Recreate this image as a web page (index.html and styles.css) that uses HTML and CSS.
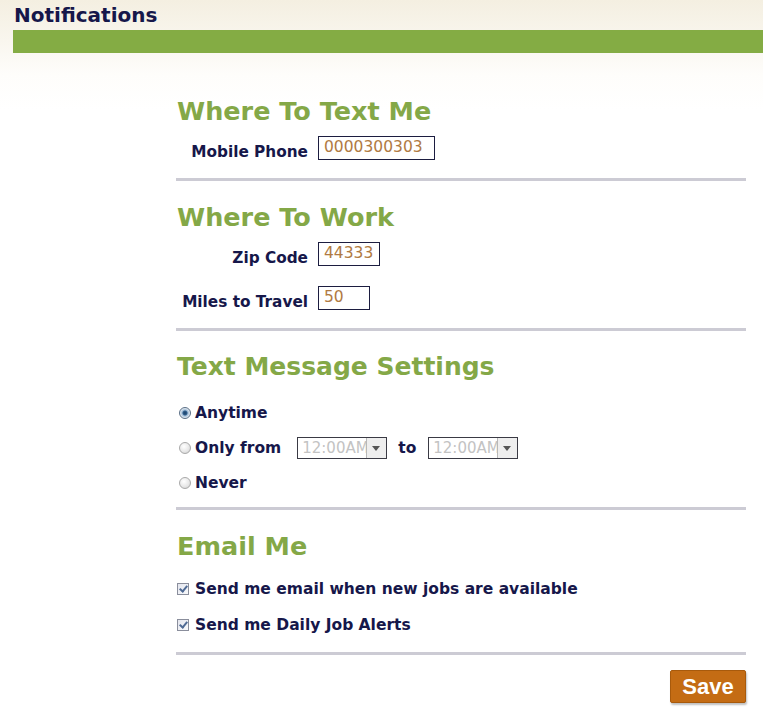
FILE: index.html
```html
<!DOCTYPE html>
<html>
<head>
<meta charset="utf-8">
<title>Notifications</title>
<link rel="stylesheet" href="styles.css">
</head>
<body>
<header class="page-header">
  <h1 class="page-title">Notifications</h1>
  <div class="title-bar"></div>
</header>
<main class="content">
  <section class="section">
    <h2 class="section-title">Where To Text Me</h2>
    <div class="field-row">
      <label class="field-label">Mobile Phone</label>
      <span class="text-input w-phone">0000300303</span>
    </div>
  </section>
  <hr class="divider">
  <section class="section">
    <h2 class="section-title t-work">Where To Work</h2>
    <div class="field-row">
      <label class="field-label">Zip Code</label>
      <span class="text-input w-zip">44333</span>
    </div>
    <div class="field-row row-gap">
      <label class="field-label">Miles to Travel</label>
      <span class="text-input w-miles">50</span>
    </div>
  </section>
  <hr class="divider">
  <section class="section">
    <h2 class="section-title t-settings">Text Message Settings</h2>
    <div class="option-row first">
      <span class="radio checked"></span><span class="option-text">Anytime</span>
    </div>
    <div class="option-row">
      <span class="radio"></span><span class="option-text">Only from</span>
      <span class="select"><span class="select-value">12:00AM</span><span class="select-arrow"></span></span>
      <span class="to-text">to</span>
      <span class="select"><span class="select-value">12:00AM</span><span class="select-arrow"></span></span>
    </div>
    <div class="option-row">
      <span class="radio"></span><span class="option-text">Never</span>
    </div>
  </section>
  <hr class="divider d-three">
  <section class="section">
    <h2 class="section-title t-email">Email Me</h2>
    <div class="check-row first">
      <span class="checkbox"></span><span class="option-text">Send me email when new jobs are available</span>
    </div>
    <div class="check-row">
      <span class="checkbox"></span><span class="option-text">Send me Daily Job Alerts</span>
    </div>
  </section>
  <hr class="divider d-four">
  <div class="actions">
    <button class="save-btn">Save</button>
  </div>
</main>
</body>
</html>
```

FILE: styles.css
```css
html, body {
  margin: 0;
  padding: 0;
}
body {
  width: 763px;
  height: 722px;
  overflow: hidden;
  font-family: "DejaVu Sans", Verdana, sans-serif;
  color: #16174a;
  background: linear-gradient(to bottom, #f4efe1 0px, #f9f6ee 40px, #fefdfb 75px, #ffffff 110px);
}
.page-header {
  padding-top: 3px;
}
.page-title {
  margin: 0 0 0 14px;
  font-size: 20px;
  line-height: 24px;
  font-weight: bold;
  color: #16174a;
}
.title-bar {
  margin: 3px 0 0 13px;
  height: 23px;
  background: #84ac44;
}
.content {
  margin-left: 177px;
  width: 570px;
  padding-top: 43px;
}
.section-title {
  margin: 0;
  font-size: 25.5px;
  line-height: 30px;
  font-weight: bold;
  color: #84a847;
}
.t-settings { font-size: 25px; }
.t-work { margin-top: 21px; }
.t-settings { margin-top: 21px; }
.t-email { margin-top: 21px; }
.field-row {
  display: flex;
  align-items: center;
  margin-top: 10px;
  height: 24px;
}
.row-gap { margin-top: 20px; }
.field-label {
  width: 131px;
  text-align: right;
  font-size: 15.3px;
  font-weight: bold;
  margin-right: 10px;
  padding-top: 8px;
}
.text-input {
  box-sizing: border-box;
  height: 24px;
  border: 1px solid #1c1d40;
  background: #fff;
  font-size: 15.5px;
  line-height: 20px;
  padding-left: 5px;
  color: #b07a42;
}
.w-phone { width: 117px; }
.w-zip { width: 62px; }
.w-miles { width: 52px; }
.divider {
  margin: 18px 0 0 -1px;
  width: 570px;
  height: 3px;
  border: 0;
  background: #cccbd4;
}
.d-three { margin-top: 13px; }
.d-four { margin-top: 16px; }
.option-row {
  display: flex;
  align-items: center;
  height: 22px;
  margin-top: 13px;
}
.option-row.first { margin-top: 20px; }
.radio {
  box-sizing: border-box;
  width: 12px;
  height: 12px;
  margin-left: 2px;
  margin-right: 4px;
  border-radius: 50%;
  border: 1px solid #a9a9a9;
  background: radial-gradient(circle at 40% 35%, #ffffff 0%, #e6e6e6 60%, #c8c8c8 100%);
}
.radio.checked {
  border-color: #5a6f86;
  background: radial-gradient(circle at 50% 50%, #1c3f66 0%, #2f5e8c 28%, #9fbbd6 42%, #e9eff5 70%, #c9d3de 100%);
}
.option-text {
  font-size: 15.5px;
  font-weight: bold;
  color: #16174a;
}
.select {
  display: inline-flex;
  box-sizing: border-box;
  width: 90px;
  height: 22px;
  border: 1px solid #3a3a44;
  background: #fff;
  margin-left: 16px;
}
.select-value {
  flex: 1;
  overflow: hidden;
  white-space: nowrap;
  font-size: 15px;
  line-height: 20px;
  padding-left: 4px;
  color: #c3c3c3;
}
.select-arrow {
  position: relative;
  flex: none;
  width: 19px;
  border-left: 1px solid #b8b8b8;
  background: #eeeeee;
}
.select-arrow::after {
  content: "";
  position: absolute;
  left: 5px;
  top: 8px;
  border-left: 4px solid transparent;
  border-right: 4px solid transparent;
  border-top: 5px solid #555;
}
.to-text {
  font-size: 15.5px;
  font-weight: bold;
  margin-left: 11px;
  margin-right: -4px;
}
.check-row {
  display: flex;
  align-items: center;
  height: 22px;
  margin-top: 14px;
}
.check-row.first { margin-top: 17px; }
.checkbox {
  position: relative;
  box-sizing: border-box;
  width: 12px;
  height: 12px;
  margin-right: 6px;
  border: 1px solid #8a8e9c;
  background: linear-gradient(135deg, #e4e6ee, #f8f9fb);
}
.checkbox::after {
  content: "";
  position: absolute;
  left: 3px;
  top: 0px;
  width: 3px;
  height: 6px;
  border-right: 2px solid #4f6a94;
  border-bottom: 2px solid #4f6a94;
  transform: rotate(40deg);
}
.actions {
  display: flex;
  justify-content: flex-end;
  margin-top: 15px;
  width: 569px;
}
.save-btn {
  width: 76px;
  height: 33px;
  border: 1px solid #a85a0c;
  border-radius: 2px;
  background: #c46c14;
  box-shadow: 1px 2px 2px rgba(0,0,0,0.25);
  color: #ffffff;
  font-family: "Liberation Sans", Arial, sans-serif;
  font-size: 22px;
  font-weight: bold;
  padding: 0;
  line-height: 31px;
}
```
